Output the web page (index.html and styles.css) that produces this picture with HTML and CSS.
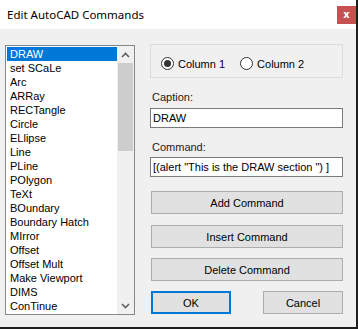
FILE: index.html
```html
<!DOCTYPE html>
<html lang="en">
<head>
    <meta charset="UTF-8">
    <title>Edit AutoCAD Commands</title>
    <link rel="stylesheet" href="styles.css">
</head>
<body>
    <div class="window">
        <div class="titlebar">
            <span class="title">Edit AutoCAD Commands</span>
            <span class="close">x</span>
        </div>

        <div class="content">
            <div class="listbox">
                <ul class="items">
                    <li class="selected">DRAW</li>
                    <li>set SCaLe</li>
                    <li>Arc</li>
                    <li>ARRay</li>
                    <li>RECTangle</li>
                    <li>Circle</li>
                    <li>ELlipse</li>
                    <li>Line</li>
                    <li>PLine</li>
                    <li>POlygon</li>
                    <li>TeXt</li>
                    <li>BOundary</li>
                    <li>Boundary Hatch</li>
                    <li>MIrror</li>
                    <li>Offset</li>
                    <li>Offset Mult</li>
                    <li>Make Viewport</li>
                    <li>DIMS</li>
                    <li>ConTinue</li>
                </ul>
                <div class="scrollbar">
                    <div class="arrow">
                        <svg width="9" height="6" viewBox="0 0 9 6"><path d="M1 5 L4.5 1.5 L8 5" fill="none" stroke="#606060" stroke-width="1.6"/></svg>
                    </div>
                    <div class="track"><div class="thumb"></div></div>
                    <div class="arrow">
                        <svg width="9" height="6" viewBox="0 0 9 6"><path d="M1 1 L4.5 4.5 L8 1" fill="none" stroke="#606060" stroke-width="1.6"/></svg>
                    </div>
                </div>
            </div>

            <div class="panel">
                <div class="group">
                    <label class="radio"><span class="dot checked"></span>Column 1</label>
                    <label class="radio"><span class="dot"></span>Column 2</label>
                </div>

                <div class="field-label caption-label">Caption:</div>
                <div class="field caption-field">DRAW</div>

                <div class="field-label command-label">Command:</div>
                <div class="field command-field">[(alert "This is the DRAW section ") ]</div>

                <button class="btn btn-add">Add Command</button>
                <button class="btn btn-next">Insert Command</button>
                <button class="btn btn-next">Delete Command</button>

                <div class="actions">
                    <button class="btn btn-ok">OK</button>
                    <button class="btn btn-cancel">Cancel</button>
                </div>
            </div>
        </div>
    </div>
</body>
</html>
```

FILE: styles.css
```css
* {
    margin: 0;
    padding: 0;
    box-sizing: border-box;
}

body {
    font-family: "Liberation Sans", Arial, sans-serif;
    font-size: 11px;
    color: #000;
    background: #f0f0f0;
}

.window {
    width: 358px;
    height: 329px;
    background: #f0f0f0;
    border-right: 2px solid #1e1e1e;
    border-bottom: 2px solid #1e1e1e;
}

.titlebar {
    height: 29px;
    background: #fff;
    display: flex;
    align-items: flex-start;
    justify-content: space-between;
}

.title {
    font-family: "Noto Sans", "Open Sans", sans-serif;
    font-size: 11.5px;
    line-height: 16px;
    padding: 7px 0 0 7px;
    color: #000;
}

.close {
    width: 19px;
    height: 18px;
    margin-top: 6px;
    background: #c75050;
    color: #fff;
    font-family: "DejaVu Sans", sans-serif;
    font-weight: bold;
    font-size: 10px;
    line-height: 17px;
    text-align: center;
}

.content {
    display: flex;
    align-items: flex-start;
    padding: 15px 0 0 5px;
    gap: 15px;
}

/* list */
.listbox {
    margin-top: 1px;
    width: 130px;
    height: 270px;
    background: #fff;
    border: 1px solid #828790;
    padding: 1px 0 1px 1px;
    display: flex;
}

.items {
    list-style: none;
    width: 110px;
}

.items li {
    height: 14px;
    line-height: 14px;
    padding-left: 3px;
    white-space: nowrap;
}

.items li.selected {
    background: #0078d7;
    color: #fff;
}

.scrollbar {
    width: 17px;
    margin-top: -1px;
    margin-bottom: -1px;
    background: #f0f0f0;
    display: flex;
    flex-direction: column;
}

.arrow {
    height: 17px;
    display: flex;
    align-items: center;
    justify-content: center;
}

.track {
    flex: 1;
    padding: 0 1px;
}

.thumb {
    height: 88px;
    background: #cdcdcd;
}

/* right side */
.panel {
    width: 193px;
}

.group {
    height: 34px;
    border: 1px solid #dcdcdc;
    display: flex;
    align-items: center;
    gap: 15px;
    padding: 5px 0 0 10px;
}

.radio {
    display: flex;
    align-items: center;
    gap: 4px;
}

.dot {
    width: 13px;
    height: 13px;
    border: 1px solid #333;
    border-radius: 50%;
    background: #fff;
    display: flex;
    align-items: center;
    justify-content: center;
}

.dot.checked::after {
    content: "";
    width: 7px;
    height: 7px;
    border-radius: 50%;
    background: #333;
}

.field-label {
    height: 14px;
    line-height: 14px;
    padding-left: 2px;
    color: #1a1a1a;
}

.caption-label,
.command-label {
    margin-top: 12px;
}

.field {
    height: 20px;
    line-height: 18px;
    background: #fff;
    border: 1px solid #7a7a7a;
    padding-left: 2px;
    white-space: nowrap;
    overflow: hidden;
}

.caption-field {
    margin-top: 4px;
}

.command-field {
    margin-top: 3px;
}

.btn {
    display: block;
    height: 23px;
    background: #e1e1e1;
    border: 1px solid #adadad;
    font-family: "Liberation Sans", Arial, sans-serif;
    font-size: 11px;
    color: #000;
}

.btn-add,
.btn-next {
    width: 192px;
    margin-left: 1px;
}

.btn-add {
    margin-top: 14px;
}

.btn-next {
    margin-top: 10px;
}

.btn-add + .btn-next {
    margin-top: 11px;
}

.actions {
    display: flex;
    justify-content: space-between;
    margin-top: 10px;
    padding-left: 1px;
}

.btn-ok {
    width: 80px;
    border: 2px solid #0078d7;
}

.btn-cancel {
    width: 80px;
}
```
